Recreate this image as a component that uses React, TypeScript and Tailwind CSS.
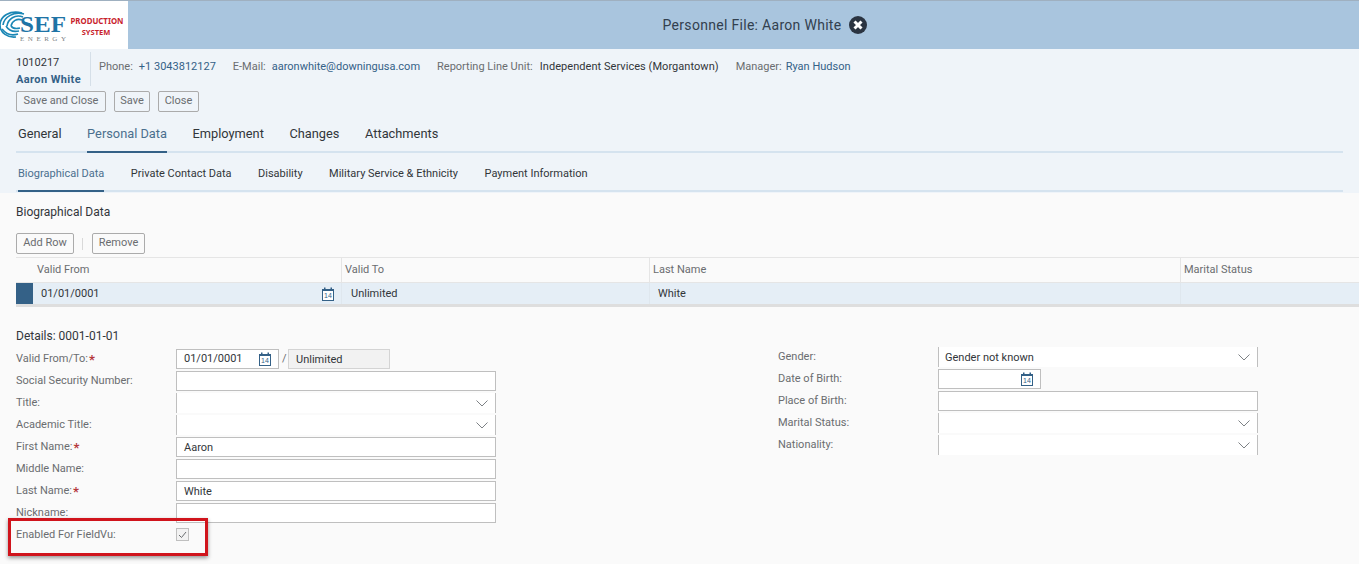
import React from "react";

function Cal() {
  return (
    <svg width="12" height="14" viewBox="0 0 12 14">
      <rect x="0.5" y="2.5" width="11" height="11" fill="#fff" stroke="#346187" />
      <rect x="0.5" y="2" width="11" height="2" fill="#346187" />
      <rect x="2" y="0.5" width="1.5" height="2" fill="#346187" />
      <rect x="8.5" y="0.5" width="1.5" height="2" fill="#346187" />
      <text x="6" y="11.2" textAnchor="middle" fontSize="7" fill="#346187" fontFamily="Liberation Sans, sans-serif">14</text>
    </svg>
  );
}

function Chevron() {
  return (
    <svg width="12" height="7" viewBox="0 0 12 7" fill="none" stroke="#7d8185" strokeWidth="1">
      <path d="M0.5 0.5 L6 6 L11.5 0.5" />
    </svg>
  );
}

function Btn({ children, w }: { children: React.ReactNode; w: string }) {
  return (
    <div className={`h-[21px] ${w} border border-[#ababab] rounded-[2px] flex items-center justify-center text-[11px] text-[#6a6d70]`}>
      {children}
    </div>
  );
}

function Label({ children, req }: { children: React.ReactNode; req?: boolean }) {
  return (
    <div className="text-[11px] text-[#6a6d70] leading-[20px] whitespace-nowrap">
      {children}
      {req && <span className="text-[#b5383a] text-[13px] leading-[10px] font-bold ml-[1px] align-[-2px]">*</span>}
    </div>
  );
}

function TextField({ value = "" }: { value?: string }) {
  return (
    <div className="h-[20px] bg-white border border-[#bfbfbf] flex items-center pl-[7px] pt-[2px] text-[11px] text-[#32363a]">{value}</div>
  );
}

function SelectField({ value = "" }: { value?: string }) {
  return (
    <div className="h-[20px] bg-white border-x border-[#bfbfbf] flex items-center justify-between pl-[6px] pr-[7px] text-[11px] text-[#32363a]">
      <span className="pt-[2px]">{value}</span>
      <Chevron />
    </div>
  );
}

function Row({ label, req, children }: { label: string; req?: boolean; children: React.ReactNode }) {
  return (
    <div className="flex h-[20px] mb-[2px]">
      <div className="w-[160px] shrink-0"><Label req={req}>{label}</Label></div>
      <div className="w-[320px]">{children}</div>
    </div>
  );
}

function DateField({ value = "" }: { value?: string }) {
  return (
    <div className="w-[103px] h-[20px] bg-white border border-[#bfbfbf] flex items-center justify-between pl-[7px] pr-[7px] text-[11px] text-[#32363a]">
      <span className="pt-[1px]">{value}</span>
      <Cal />
    </div>
  );
}

export default function App() {
  return (
    <div className="relative w-[1359px] h-[564px] overflow-hidden bg-[#fafafa] text-[#32363a]" style={{ fontFamily: 'Roboto, sans-serif' }}>
      {/* Shell bar */}
      <div className="h-[49px] bg-[#a9c5de] border-t border-[#9fb0c0] flex">
        <div className="w-[128px] h-[48px] bg-white flex items-center shrink-0 overflow-hidden">
          <svg width="128" height="48" viewBox="0 0 128 48">
            <g fill="none" stroke="#1b87b5" strokeWidth="1.6">
              <path d="M22 12 C10 9 0 15 0 24 C0 32 8 37 16 36" />
              <path d="M24 13 C14 10 4 16 3 24" />
              <path d="M23 16 C15 13 8 18 7 25" />
              <path d="M22 19 C17 17 12 20 11 25" />
              <path d="M2 28 C6 33 12 35 18 33" />
              <path d="M6 25 C9 30 14 31 19 30" />
              <path d="M11 25 C13 28 16 28 20 27" />
            </g>
            <text x="20" y="31" fontFamily="Liberation Serif, serif" fontWeight="700" fontSize="23" fill="#1f74a6" textLength="46" lengthAdjust="spacingAndGlyphs">SEF</text>
            <text x="20" y="40" fontFamily="Liberation Serif, serif" fontSize="7" fill="#7b7f83" textLength="46">ENERGY</text>
            <text x="97" y="23" textAnchor="middle" fontFamily="Noto Sans, sans-serif" fontWeight="700" fontSize="8" fill="#c8232c" textLength="53" lengthAdjust="spacingAndGlyphs">PRODUCTION</text>
            <text x="96" y="34" textAnchor="middle" fontFamily="Noto Sans, sans-serif" fontWeight="700" fontSize="7.5" fill="#c8232c">SYSTEM</text>
          </svg>
        </div>
        <div className="flex-1 flex items-center justify-center pl-[43px] gap-[8px]">
          <span className="text-[14px] text-[#32404e] tracking-[0.3px]">Personnel File: Aaron White</span>
          <svg width="18" height="18" viewBox="0 0 18 18">
            <circle cx="9" cy="9" r="9" fill="#2b3441" />
            <path d="M5.5 5.5 L12.5 12.5 M12.5 5.5 L5.5 12.5" stroke="#fff" strokeWidth="3" />
          </svg>
        </div>
      </div>

      {/* Object header */}
      <div className="h-[144px] bg-[#eff4f9] px-[16px] pt-[5px]">
        <div className="flex h-[36px]">
          <div className="w-[75px] h-[34px] border-r border-[#d5dfe8] -mt-[2px] pt-[2px]">
            <div className="text-[11px] leading-[17px] text-[#32363a]">1010217</div>
            <div className="text-[11px] leading-[17px] font-bold text-[#346187] tracking-[0.4px] whitespace-nowrap">Aaron White</div>
          </div>
          <div className="flex gap-[17px] pl-[8px] pt-[4px] text-[11px] leading-[17px] whitespace-nowrap">
            <span><span className="text-[#6a6d70] mr-[6px]">Phone:</span><span className="text-[#346187]">+1 3043812127</span></span>
            <span><span className="text-[#6a6d70] mr-[6px]">E-Mail:</span><span className="text-[#346187]">aaronwhite@downingusa.com</span></span>
            <span><span className="text-[#6a6d70] mr-[7px]">Reporting Line Unit:</span><span className="text-[#32363a] tracking-[0.05px]">Independent Services (Morgantown)</span></span>
            <span><span className="text-[#6a6d70] mr-[4px]">Manager:</span><span className="text-[#346187]">Ryan Hudson</span></span>
          </div>
        </div>
        <div className="flex gap-[8px] mt-[1px]">
          <Btn w="w-[90px]">Save and Close</Btn>
          <Btn w="w-[36px]">Save</Btn>
          <Btn w="w-[41px]">Close</Btn>
        </div>
        {/* Tabs */}
        <div className="flex h-[30px] mt-[11px] border-b-2 border-[#d5e3ef] text-[12.8px] gap-[25.6px] pl-[2px] leading-[22px]">
          <div className="text-[#32363a]">General</div>
          <div className="h-[30px] border-b-2 border-[#346187] text-[#4b6f8e]">Personal Data</div>
          <div>Employment</div>
          <div>Changes</div>
          <div>Attachments</div>
        </div>
        <div className="flex h-[39px] border-b-2 border-[#d5e3ef] text-[11px] gap-[26.5px] pl-[2px] pt-[12px] leading-[17px]">
          <div className="h-[27px] border-b-2 border-[#346187] text-[#4b6f8e] px-0">Biographical Data</div>
          <div>Private Contact Data</div>
          <div>Disability</div>
          <div>Military Service &amp; Ethnicity</div>
          <div>Payment Information</div>
        </div>
      </div>

      {/* Biographical data */}
      <div className="pt-[11px]">
        <div className="pl-[16px] text-[12px] leading-[16px] text-[#32363a]">Biographical Data</div>
        <div className="pl-[16px] mt-[13px] flex items-center h-[21px]">
          <Btn w="w-[58px]">Add Row</Btn>
          <div className="w-px h-[12px] bg-[#d9d9d9] ml-[8px] mr-[9px]" />
          <Btn w="w-[53px]">Remove</Btn>
        </div>
        <div className="ml-[16px] mt-[3px] text-[11px]">
          <div className="flex h-[26px] bg-[#fafafa] border-y border-[#e5e5e5] text-[#6a6d70] leading-[23px]">
            <div className="w-[326px] pl-[21px] border-r border-[#e5e5e5]">Valid From</div>
            <div className="w-[308px] pl-[3px] border-r border-[#e5e5e5]">Valid To</div>
            <div className="w-[531px] pl-[3px] border-r border-[#e5e5e5]">Last Name</div>
            <div className="flex-1 pl-[3px]">Marital Status</div>
          </div>
          <div className="flex h-[21px] bg-[#e5eef6] text-[#32363a] items-center">
            <div className="w-[17px] h-full bg-[#346187]" />
            <div className="w-[309px] h-full flex items-center justify-between pl-[8px] pr-[7px] border-r border-[#dfe7ee]">
              <span className="pt-[2px]">01/01/0001</span>
              <Cal />
            </div>
            <div className="w-[308px] h-full flex items-center pl-[9px] pt-[2px] border-r border-[#dfe7ee]">Unlimited</div>
            <div className="w-[531px] h-full flex items-center pl-[8px] pt-[2px] border-r border-[#dfe7ee]">White</div>
            <div className="flex-1" />
          </div>
        </div>
        <div className="h-[3px] ml-[16px] bg-[#dedede]" />
      </div>

      {/* Details */}
      <div className="px-[16px] pt-[21px]">
        <div className="text-[12px] leading-[16px] text-[#32363a]">Details: 0001-01-01</div>
        <div className="flex mt-[3px]">
          <div className="w-[762px] shrink-0 pt-[2px]">
            <Row label="Valid From/To:" req>
              <div className="flex items-center">
                <DateField value="01/01/0001" />
                <span className="w-[6px] ml-[3px] text-[11px] text-[#6a6d70]">/</span>
                <div className="w-[102px] h-[20px] bg-[#f2f2f2] border border-[#d4d4d4] flex items-center pl-[7px] pt-[2px] text-[11px]">Unlimited</div>
              </div>
            </Row>
            <Row label="Social Security Number:"><TextField /></Row>
            <Row label="Title:"><SelectField /></Row>
            <Row label="Academic Title:"><SelectField /></Row>
            <Row label="First Name:" req><TextField value="Aaron" /></Row>
            <Row label="Middle Name:"><TextField /></Row>
            <Row label="Last Name:" req><TextField value="White" /></Row>
            <Row label="Nickname:"><TextField /></Row>
            <Row label="Enabled For FieldVu:">
              <div className="w-[13px] h-[13px] mt-[3px] bg-[#f2f2f2] border border-[#bfbfbf] flex items-center justify-center">
                <svg width="9" height="8" viewBox="0 0 9 8" fill="none" stroke="#6a6d70" strokeWidth="1"><path d="M1 4 L3.5 6.5 L8 1" /></svg>
              </div>
            </Row>
          </div>
          <div className="flex-1">
            <Row label="Gender:"><SelectField value="Gender not known" /></Row>
            <Row label="Date of Birth:"><DateField /></Row>
            <Row label="Place of Birth:"><TextField /></Row>
            <Row label="Marital Status:"><SelectField /></Row>
            <Row label="Nationality:"><SelectField /></Row>
          </div>
        </div>
      </div>

      {/* Red annotation box */}
      <div className="absolute left-[8px] top-[518px] w-[200px] h-[38px] border-[3px] border-[#d0141c] shadow-[0_2px_4px_rgba(0,0,0,0.4)]" />
    </div>
  );
}
